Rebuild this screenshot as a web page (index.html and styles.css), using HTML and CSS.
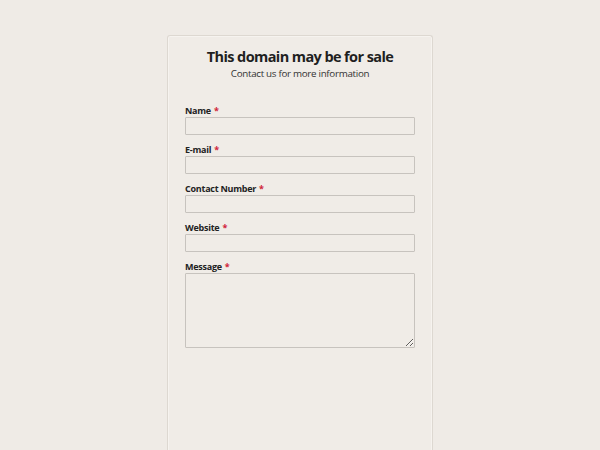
FILE: index.html
```html
<!DOCTYPE html>
<html>
<head>
<meta charset="utf-8">
<link rel="stylesheet" href="styles.css">
</head>
<body>
<div class="card">
  <h1 class="title">This domain may be for sale</h1>
  <p class="subtitle">Contact us for more information</p>
  <form class="form">
    <div class="field">
      <label class="label">Name<span class="req">*</span></label>
      <input class="input" type="text">
    </div>
    <div class="field">
      <label class="label">E-mail<span class="req">*</span></label>
      <input class="input" type="text">
    </div>
    <div class="field">
      <label class="label">Contact Number<span class="req">*</span></label>
      <input class="input" type="text">
    </div>
    <div class="field">
      <label class="label">Website<span class="req">*</span></label>
      <input class="input" type="text">
    </div>
    <div class="field">
      <label class="label">Message<span class="req">*</span></label>
      <textarea class="textarea"></textarea>
    </div>
  </form>
</div>
</body>
</html>
```
FILE: styles.css
```css
html, body {
  margin: 0;
  padding: 0;
  background: #efebe6;
  font-family: "Open Sans", "Noto Sans", sans-serif;
  color: #222;
}
.card {
  box-sizing: border-box;
  width: 266px;
  min-height: 430px;
  margin: 35px auto 0;
  padding: 10px 17px 0;
  background: #f0ece7;
  border: 1px solid #ddd8d1;
  border-bottom: none;
  border-radius: 3px 3px 0 0;
  box-shadow: inset 0 0 0 1px #f6f3ef;
}
.title {
  margin: 0;
  font-size: 14.5px;
  line-height: 22px;
  font-weight: 700;
  text-align: center;
  letter-spacing: -0.6px;
  color: #1f1f1f;
}
.subtitle {
  margin: -1px 0 0;
  font-size: 9.8px;
  line-height: 14px;
  text-align: center;
  color: #333;
  letter-spacing: -0.3px;
}
.form {
  margin-top: 24px;
  display: flex;
  flex-direction: column;
  gap: 9px;
}
.field {
  display: flex;
  flex-direction: column;
}
.label {
  font-size: 9px;
  line-height: 12px;
  font-weight: 700;
  color: #222;
  margin-bottom: 0;
  letter-spacing: -0.25px;
}
.req {
  color: #d0243a;
  margin-left: 3px;
}
.input, .textarea {
  box-sizing: border-box;
  width: 230px;
  margin: 0;
  padding: 2px 4px;
  background: #f0ece7;
  border: 1px solid #c7c3be;
  border-radius: 1px;
  font-family: inherit;
  outline: none;
}
.input {
  height: 18px;
}
.textarea {
  height: 75px;
  resize: vertical;
  display: block;
}
```
